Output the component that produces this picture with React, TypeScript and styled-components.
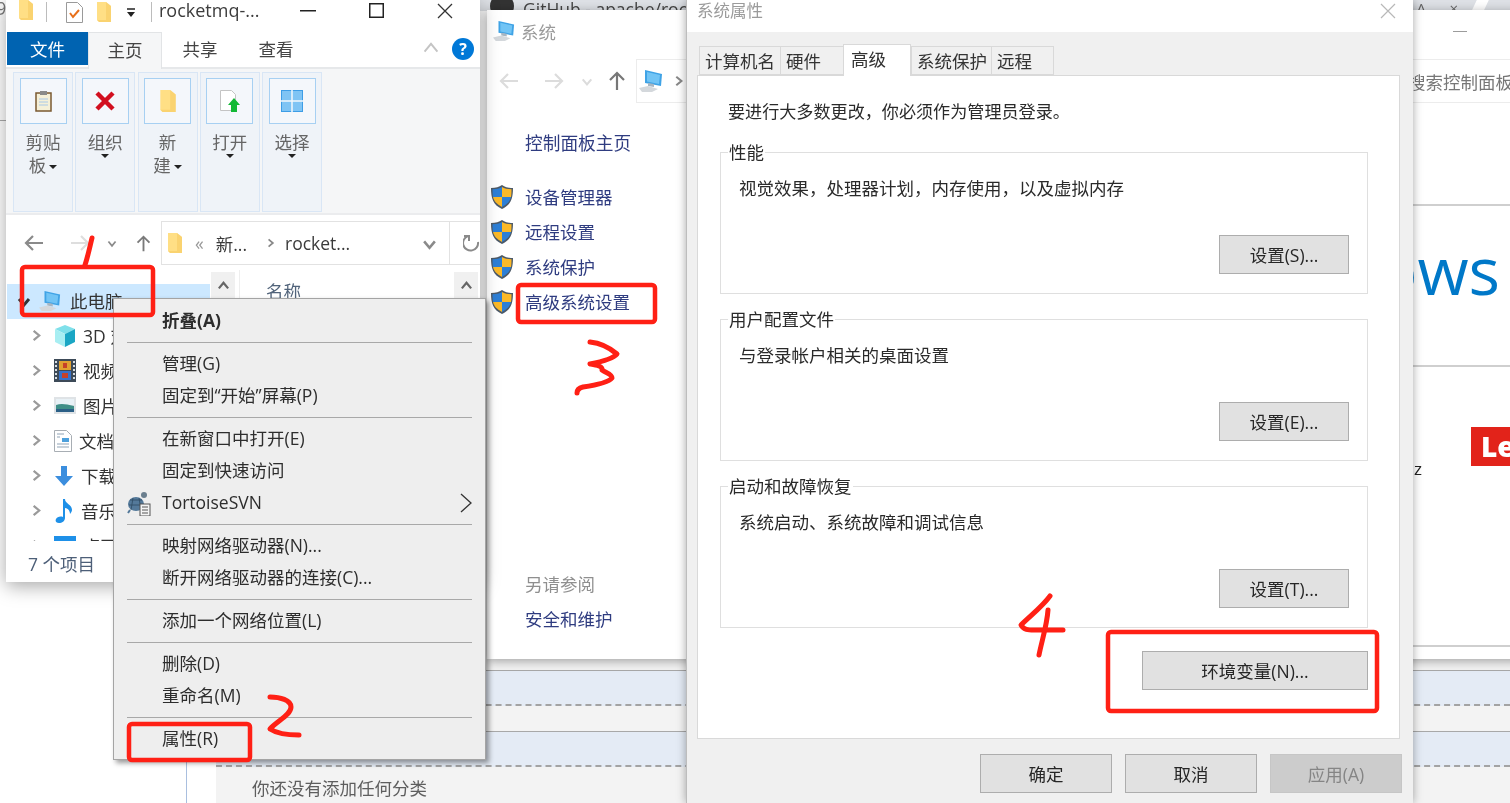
import React from "react";
import styled, { createGlobalStyle } from "styled-components";

const Global = createGlobalStyle`
  html, body { margin: 0; padding: 0; background: #fff; overflow: hidden; }
  * { box-sizing: border-box; }
  body { font-family: "Open Sans", "Noto Sans CJK SC", sans-serif; font-size: 17.5px; color: #2a2a2a; }
`;

const Desktop = styled.div`
  position: relative;
  width: 1510px;
  height: 803px;
  overflow: hidden;
  background: #fff;
  filter: blur(0.4px);
`;

/* ---------- what lies behind the windows ---------- */
const BrowserStrip = styled.div`
  position: absolute;
  left: 480px;
  right: 0;
  top: 0;
  height: 11px;
  background: #dee1e6;
  display: flex;
  align-items: center;
  overflow: hidden;
  padding-left: 10px;
  color: #444;
`;
const BrowserTitle = styled.span`
  margin-left: 9px;
  white-space: nowrap;
  position: relative;
  top: 3px;
`;
const BrowserTabClose = styled.span`
  margin-left: auto;
  margin-right: 16px;
  position: relative;
  top: 2px;
  color: #666;
  font-size: 15px;
  white-space: pre;
`;
const BrowserTabGap = styled.span`
  width: 12px;
  height: 20px;
  margin-right: 24px;
  background: #fff;
  transform: skewX(-25deg);
`;
const EdgeGlyph = styled.div`
  position: absolute;
  left: -4px;
  top: -4px;
  color: #777;
  font-size: 18px;
`;
const EdgeRule = styled.div`
  position: absolute;
  left: 0;
  top: 120px;
  width: 6px;
  height: 1px;
  background: #aaa;
`;
const PageRule = styled.div`
  position: absolute;
  left: 186px;
  top: 756px;
  bottom: 0;
  width: 1px;
  background: #a9bfdf;
`;
const PageBehind = styled.div`
  position: absolute;
  left: 216px;
  right: 0;
  top: 659px;
  bottom: 0;
  background: #f3f3f3;
  display: flex;
  flex-direction: column;
`;
const PageGap = styled.div<{ $h: number }>`
  height: ${(p) => p.$h}px;
  border-bottom: 1px solid #a8a8a8;
`;
const PageBand = styled.div`
  height: 35px;
  background: #e4ebf5;
  border-bottom: 2px dashed #a3a3a3;
`;
const PageNote = styled.div`
  margin-top: 10px;
  padding-left: 36px;
  line-height: 23px;
  color: #5e5e5e;
`;

/* ---------- explorer ---------- */
const Explorer = styled.section`
  position: absolute;
  left: 6px;
  top: 0;
  width: 474px;
  height: 582px;
  background: #fff;
  box-shadow: 0 4px 18px rgba(0, 0, 0, 0.35);
  display: flex;
  flex-direction: column;
`;
const ExplorerTitle = styled.header`
  height: 32px;
  display: flex;
  align-items: flex-start;
  flex: none;
`;
const Quick = styled.span<{ $w: number; $top?: number; $ml?: number }>`
  width: ${(p) => p.$w}px;
  height: 32px;
  flex: none;
  display: flex;
  justify-content: center;
  margin-left: ${(p) => p.$ml ?? 0}px;
  padding-top: ${(p) => p.$top ?? 0}px;
`;
const QuickRule = styled.span<{ $ml?: number }>`
  width: 1px;
  height: 20px;
  margin-top: 2px;
  margin-left: ${(p) => p.$ml ?? 0}px;
  flex: none;
  background: #bcbcbc;
`;
const WindowName = styled.span`
  margin-left: 7px;
  line-height: 20px;
  font-size: 18px;
  color: #3c3c3c;
  white-space: nowrap;
`;
const Controls = styled.div`
  margin-left: auto;
  display: flex;
`;
const Control = styled.span<{ $w: number }>`
  width: ${(p) => p.$w}px;
  height: 21px;
  display: flex;
  align-items: center;
  justify-content: center;
`;
const TabRow = styled.nav`
  height: 37px;
  flex: none;
  display: flex;
  align-items: flex-start;
  border-bottom: 2px solid #e6e8ea;
`;
const FileTab = styled.span`
  width: 81px;
  height: 33px;
  margin-left: 1px;
  background: #0063b1;
  color: #fff;
  display: flex;
  align-items: center;
  justify-content: center;
`;
const HomeTab = styled.span`
  width: 74px;
  height: 37px;
  background: #f5f6f7;
  border: 1px solid #e2e4e6;
  border-bottom: none;
  display: flex;
  align-items: center;
  justify-content: center;
  padding-bottom: 4px;
  color: #444;
`;
const PlainTab = styled.span`
  width: 76px;
  height: 33px;
  display: flex;
  align-items: center;
  justify-content: center;
  color: #444;
`;
const RibbonTools = styled.div`
  margin-left: auto;
  display: flex;
  align-items: center;
  height: 37px;
  gap: 12px;
  padding: 0 6px 4px 0;
`;
const HelpDot = styled.span`
  width: 22px;
  height: 22px;
  border-radius: 50%;
  background: #0078d7;
  color: #fff;
  font-weight: 700;
  font-size: 16px;
  display: flex;
  align-items: center;
  justify-content: center;
`;
const Ribbon = styled.div`
  height: 146px;
  flex: none;
  background: #f5f6f7;
  border-bottom: 2px solid #ebecee;
  padding: 3px 7px;
  display: flex;
  gap: 2.25px;
`;
const RibbonGroup = styled.div`
  width: 60px;
  height: 140px;
  background: #eff3f8;
  border: 1px solid #d9e6f5;
  padding: 5px 5px 0;
  display: flex;
  flex-direction: column;
  align-items: center;
`;
const RibbonButton = styled.div`
  width: 47px;
  height: 46px;
  flex: none;
  background: #f4f7fb;
  border: 1px solid #a7d0f2;
  display: flex;
  align-items: center;
  justify-content: center;
`;
const RibbonLabel = styled.div`
  margin-top: 7px;
  line-height: 23px;
  text-align: center;
  color: #666;
  white-space: nowrap;
`;
const Caret = styled.span`
  display: inline-block;
  width: 0;
  height: 0;
  margin-left: 3px;
  vertical-align: middle;
  border-left: 4px solid transparent;
  border-right: 4px solid transparent;
  border-top: 4px solid #222;
`;
const BlockCaret = styled(Caret)`
  display: block;
  margin: 0 auto;
`;
const NavRow = styled.div`
  height: 55px;
  flex: none;
  display: flex;
  align-items: flex-start;
  padding-top: 6px;
`;
const NavSlot = styled.span<{ $w: number }>`
  width: ${(p) => p.$w}px;
  height: 44px;
  flex: none;
  display: flex;
  align-items: center;
  justify-content: center;
`;
const AddressBox = styled.div`
  width: 289px;
  height: 44px;
  flex: none;
  border: 1.5px solid #e2e2e2;
  display: flex;
  align-items: center;
  padding-left: 6px;
  color: #444;
  position: relative;
`;
const Crumb = styled.span<{ $ml: number; $tone?: string }>`
  margin-left: ${(p) => p.$ml}px;
  color: ${(p) => p.$tone ?? "#3a3a3a"};
  white-space: nowrap;
  display: flex;
`;
const AddressEnd = styled.span`
  margin-left: auto;
  margin-right: 12px;
  display: flex;
`;
const RefreshBox = styled.span`
  flex: 1;
  height: 44px;
  border: 1.5px solid #e2e2e2;
  border-left: none;
  border-right: none;
  display: flex;
  align-items: center;
  justify-content: flex-end;
  overflow: hidden;
`;
const Panes = styled.div`
  height: 271px;
  flex: none;
  overflow: hidden;
  display: flex;
`;
const TreePane = styled.div`
  width: 204px;
  flex: none;
  padding: 14px 0 0 1px;
`;
const TreeRow = styled.div<{ $on?: boolean; $indent: number }>`
  height: 35px;
  display: flex;
  align-items: center;
  white-space: nowrap;
  overflow: hidden;
  background: ${(p) => (p.$on ? "#cce8ff" : "transparent")};
  padding: 0 0 2px ${(p) => p.$indent}px;
  color: #333;
`;
const TreeIcon = styled.span<{ $ml: number; $mr: number }>`
  margin-left: ${(p) => p.$ml}px;
  margin-right: ${(p) => p.$mr}px;
  display: flex;
  flex: none;
`;
const ScrollCap = styled.div<{ $mr: number }>`
  width: 24px;
  height: 28px;
  margin: 2px ${(p) => p.$mr}px 0 1px;
  flex: none;
  background: #f0f0f0;
  display: flex;
  align-items: center;
  justify-content: center;
`;
const ColumnHead = styled.div`
  flex: 1;
  padding: 10px 0 0 26px;
  line-height: 23px;
  color: #51637a;
  border-left: 1px solid #eee;
`;
const StatusBar = styled.footer`
  flex: 1;
  padding: 10px 0 0 22px;
  line-height: 26px;
  color: #4d5f78;
`;

/* ---------- context menu ---------- */
const Menu = styled.div`
  position: absolute;
  left: 113px;
  top: 298px;
  width: 373px;
  height: 462px;
  background: #eee;
  border: 1px solid #a4a4a4;
  box-shadow: 3px 3px 5px rgba(0, 0, 0, 0.4);
  padding-top: 6px;
  z-index: 2;
`;
const MenuRow = styled.div<{ $strong?: boolean }>`
  height: 32px;
  position: relative;
  display: flex;
  align-items: center;
  padding: 0 0 3px 48px;
  font-weight: ${(p) => (p.$strong ? 700 : 400)};
  color: #2d2d2d;
  white-space: nowrap;
`;
const MenuRule = styled.div`
  height: 1px;
  margin: 5px 13px;
  background: #a8a8a8;
`;
const MenuGlyph = styled.span`
  position: absolute;
  left: 13px;
  top: 3px;
  display: flex;
`;
const MenuArrow = styled.span`
  position: absolute;
  right: 13px;
  top: 6px;
  display: flex;
`;

/* ---------- system window ---------- */
const SystemWindow = styled.section`
  position: absolute;
  left: 487px;
  top: 10px;
  width: 1100px;
  height: 649px;
  background: #fff;
  box-shadow: 0 2px 10px rgba(0, 0, 0, 0.35);
  display: flex;
  flex-direction: column;
`;
const SystemTitle = styled.header`
  height: 44px;
  flex: none;
  display: flex;
  align-items: center;
  padding: 0 0 2px 6px;
  color: #9a9a9a;
  gap: 6px;
`;
const SystemMin = styled.span`
  margin-left: auto;
  margin-right: 120px;
  width: 14px;
  height: 1px;
  background: #9c9c9c;
`;
const SystemNav = styled.div`
  height: 49px;
  flex: none;
  display: flex;
  align-items: flex-start;
  padding: 5px 0 0 0;
`;
const Breadcrumb = styled.div`
  width: 764px;
  height: 44px;
  flex: none;
  border: 1.5px solid #ececec;
  display: flex;
  align-items: center;
  padding-left: 2px;
  gap: 9px;
`;
const SearchBox = styled.div`
  flex: 1;
  height: 44px;
  border: 1.5px solid #ececec;
  border-left: none;
  display: flex;
  align-items: center;
  padding-left: 8px;
  color: #777;
`;
const SystemBody = styled.div`
  flex: 1;
  display: flex;
  min-height: 0;
`;
const SideBar = styled.aside`
  width: 200px;
  flex: none;
  padding: 24px 0 22px 4px;
  display: flex;
  flex-direction: column;
`;
const SideHome = styled.div`
  line-height: 32px;
  padding-left: 34px;
  color: #2f3c80;
  margin-bottom: 20px;
  font-size: 17.7px;
`;
const SideLink = styled.div`
  height: 35px;
  display: flex;
  align-items: center;
  gap: 12px;
  color: #2f3c80;
  white-space: nowrap;
`;
const SideSeeAlso = styled.div`
  margin-top: auto;
  line-height: 35px;
  padding-left: 34px;
  color: #8f8f8f;
`;
const SidePlain = styled.div`
  line-height: 35px;
  padding-left: 34px;
  color: #2f3c80;
`;
const MainColumn = styled.main`
  flex: 1;
  display: flex;
  flex-direction: column;
`;
const MainSection = styled.div<{ $h: number }>`
  height: ${(p) => p.$h}px;
  flex: none;
  border-bottom: 2px solid #cfcfcf;
`;
const BrandSection = styled(MainSection)`
  text-align: right;
  padding: 28px 87px 0 0;
`;
const BrandWord = styled.span`
  font-size: 66px;
  font-weight: 400;
  line-height: 70px;
  color: #0078c8;
  font-family: "Open Sans", sans-serif;
`;
const SpecSection = styled(MainSection)`
  display: flex;
  align-items: flex-start;
  padding: 60px 0 0 0;
`;
const SpecText = styled.span`
  margin-left: auto;
  margin-top: 30px;
  line-height: 24px;
  font-size: 17px;
  color: #222;
`;
const Lenovo = styled.span`
  width: 116px;
  height: 39px;
  margin-left: 49px;
  background: #e2231a;
  color: #fff;
  font-weight: 800;
  font-size: 28px;
  line-height: 39px;
  padding-left: 10px;
  font-family: "Open Sans", sans-serif;
`;

/* ---------- system properties dialog ---------- */
const Dialog = styled.section`
  position: absolute;
  left: 686px;
  top: 0;
  width: 727px;
  height: 803px;
  background: #f0f0f0;
  border-left: 1px solid #bdbdbd;
  box-shadow: 0 0 9px rgba(0, 0, 0, 0.35);
  display: flex;
  flex-direction: column;
`;
const DialogTitle = styled.header`
  height: 32px;
  flex: none;
  background: #fff;
  display: flex;
  align-items: flex-start;
  justify-content: space-between;
  padding: 0 17px 0 10px;
  color: #9b9b9b;
  line-height: 22px;
  font-size: 16.5px;
`;
const DialogClose = styled.svg`
  margin-top: 3px;
`;
const DialogTabs = styled.div`
  display: flex;
  align-items: flex-end;
  height: 31px;
  margin: 12px 0 0 12px;
  flex: none;
  position: relative;
  z-index: 1;
`;
const DialogTab = styled.span<{ $w: number; $on?: boolean }>`
  width: ${(p) => p.$w}px;
  height: ${(p) => (p.$on ? 32 : 29)}px;
  margin-bottom: ${(p) => (p.$on ? -1 : 0)}px;
  background: ${(p) => (p.$on ? "#fff" : "#f0f0f0")};
  border: 1px solid #d9d9d9;
  border-right-width: ${(p) => (p.$on ? 1 : 0)}px;
  border-bottom: ${(p) => (p.$on ? "none" : "1px solid #d9d9d9")};
  padding: ${(p) => (p.$on ? "0 0 4px 7px" : "0 0 0 5px")};
  display: flex;
  align-items: center;
  white-space: nowrap;
  color: #333;
`;
const TabEnd = styled.span`
  width: 1px;
  height: 29px;
  background: #d9d9d9;
`;
const TabPanel = styled.div`
  width: 703px;
  height: 664px;
  flex: none;
  margin-left: 10px;
  background: #fff;
  border: 1px solid #d9d9d9;
  padding: 24px 31px 0 22px;
  display: flex;
  flex-direction: column;
`;
const PanelLead = styled.p`
  margin: 0 0 29px 8px;
  line-height: 23px;
  color: #2a2a2a;
  font-size: 17.1px;
  white-space: nowrap;
`;
const GroupBox = styled.div`
  height: 142px;
  flex: none;
  margin-bottom: 25px;
  border: 1.5px solid #dfdfdf;
  display: flex;
  flex-direction: column;
  align-items: flex-start;
`;
const GroupLabel = styled.span`
  margin: -12px 0 0 7px;
  padding: 0 1px;
  background: #fff;
  line-height: 23px;
  color: #2a2a2a;
`;
const GroupText = styled.span`
  margin: 13px 0 0 18px;
  line-height: 23px;
  color: #2a2a2a;
  white-space: nowrap;
`;
const DialogButton = styled.button<{ $off?: boolean; $w?: number }>`
  width: ${(p) => p.$w ?? 132}px;
  height: 39px;
  flex: none;
  font: inherit;
  padding: 0;
  background: ${(p) => (p.$off ? "#cccccc" : "#e1e1e1")};
  color: ${(p) => (p.$off ? "#858585" : "#262626")};
  border: 1.5px solid ${(p) => (p.$off ? "#c6c6c6" : "#adadad")};
`;
const GroupAction = styled(DialogButton)`
  margin: auto 18px 19px auto;
  align-self: flex-end;
`;
const EnvButton = styled(DialogButton)`
  align-self: flex-end;
  margin-top: -2px;
`;
const DialogFooter = styled.footer`
  padding: 15px 0 0 293px;
  display: flex;
  gap: 13px;
`;

/* ---------- annotations ---------- */
const Ink = styled.svg`
  position: absolute;
  left: 0;
  top: 0;
  z-index: 5;
  pointer-events: none;
`;

/* ---------- drawings ---------- */
const Folder = ({ w = 14, h = 20 }: { w?: number; h?: number }) => (
  <svg width={w} height={h} viewBox="0 0 14 20">
    <path d="M0 0h9l5 4v16H2L0 18z" fill="#ffdf85" />
    <path d="M9 0v18H2l-2 0 2 2h12V4z" fill="#f6c95f" opacity=".55" />
  </svg>
);
const Chevron = ({ dir = "r", c = "#9a9a9a", s = 14, sw = 2.4 }: { dir?: string; c?: string; s?: number; sw?: number }) => {
  const d: Record<string, string> = {
    r: "M5 2l6 5-6 5",
    l: "M9 2L3 7l6 5",
    d: "M2 5l5 6 5-6",
    u: "M2 9l5-6 5 6",
  };
  return (
    <svg width={s} height={s} viewBox="0 0 14 14" fill="none">
      <path d={d[dir]} stroke={c} strokeWidth={sw} />
    </svg>
  );
};
const ArrowIcon = ({ dir, c, w = 20 }: { dir: "l" | "r" | "u"; c: string; w?: number }) => {
  const d = { l: "M19 10H2M9 3l-7 7 7 7", r: "M1 10h17M11 3l7 7-7 7", u: "M10 19V2M3 9l7-7 7 7" };
  return (
    <svg width={w} height={w} viewBox="0 0 20 20" fill="none">
      <path d={d[dir]} stroke={c} strokeWidth={2.2} />
    </svg>
  );
};
const Computer = ({ s = 22 }: { s?: number }) => (
  <svg width={s} height={s} viewBox="0 0 24 24">
    <path d="M6 1l17 4-1 12L6 14z" fill="#3fa3e6" />
    <path d="M8 3l13 3-1 9-12-2.5z" fill="#71c4f5" />
    <path d="M9 14l6 1v3l-6-1z" fill="#a8b6c2" />
    <path d="M0 19l9-2 10 3-6 3H3z" fill="#d4d8dc" />
  </svg>
);
const Shield = () => (
  <svg width={22} height={24} viewBox="0 0 22 24">
    <path d="M11 0c3 2 6 3 11 3 0 10-2 17-11 21C2 20 0 13 0 3c5 0 8-1 11-3z" fill="#4d5a68" />
    <path d="M11 2v10H2c-.4-2-.5-4-.5-7.700 4 0 7-1 9.500-2.300z" fill="#2d7fd6" />
    <path d="M11 2c2.500 1.300 5.500 2.300 9.500 2.300 0 3.700-.1 5.700-.5 7.700h-9z" fill="#fbb928" />
    <path d="M2 12h9v10c-5.500-3-8-6-9-10z" fill="#fbb928" />
    <path d="M11 12h9c-1 4-3.500 7-9 10z" fill="#2d7fd6" />
  </svg>
);
const Cube = () => (
  <svg width={22} height={22} viewBox="0 0 22 22">
    <path d="M11 0l10 4-10 5L1 4z" fill="#7fe0ea" />
    <path d="M1 4l10 5v13L1 17z" fill="#a8eef2" />
    <path d="M21 4L11 9v13l10-5z" fill="#1aa6c4" />
  </svg>
);
const Film = () => (
  <svg width={22} height={23} viewBox="0 0 22 23">
    <rect width="22" height="23" fill="#3d4a58" />
    <path d="M1 2h2v2H1zM1 6h2v2H1zM1 10h2v2H1zM1 14h2v2H1zM1 18h2v2H1zM19 2h2v2h-2zM19 6h2v2h-2zM19 10h2v2h-2zM19 14h2v2h-2zM19 18h2v2h-2z" fill="#d8dde2" />
    <rect x="5" y="2" width="12" height="9" fill="#e0a030" />
    <rect x="5" y="12" width="12" height="9" fill="#3670c8" />
    <path d="M9 4h4v5H9zM8 14h6v5H8z" fill="#c64028" />
  </svg>
);
const Picture = () => (
  <svg width={22} height={17} viewBox="0 0 22 17">
    <rect width="22" height="17" fill="#dfe3e6" />
    <rect x="2" y="2" width="18" height="6" fill="#e8f1f6" />
    <path d="M2 8c5-2 10-1 18 1v6H2z" fill="#3f8f88" />
    <rect x="2" y="12" width="18" height="3" fill="#2b5f86" />
  </svg>
);
const DocIcon = () => (
  <svg width={18} height={22} viewBox="0 0 18 22">
    <path d="M.5.500h12l5 5v16H.5z" fill="#fff" stroke="#a8aeb4" />
    <path d="M3 4h7M3 7h3M3 14h12M3 17h12" stroke="#8fa3b6" />
    <rect x="8" y="8" width="7" height="4" fill="#4da0dc" />
  </svg>
);
const Download = () => (
  <svg width={20} height={20} viewBox="0 0 20 20">
    <path d="M7 0h6v10h6l-9 10L1 10h6z" fill="#3b8ede" />
  </svg>
);
const Note = () => (
  <svg width={20} height={24} viewBox="0 0 20 24">
    <path d="M9 0h2c0 5 7 5 7 11 0 1-1 3-2 4 0-4-3-6-5-6v10c0 3-3 5-6 5-3 0-4-2-3-4s4-3 7-2z" fill="#1e90e8" />
  </svg>
);
const DesktopIcon = () => (
  <svg width={22} height={20} viewBox="0 0 22 20">
    <rect width="22" height="15" fill="#1e90e8" />
  </svg>
);
const Tortoise = () => (
  <svg width={24} height={26} viewBox="0 0 24 26">
    <ellipse cx="9" cy="14" rx="8" ry="7" fill="#54799a" />
    <path d="M3 10h12M2 15h14M6 8l-2 12M12 8l2 12" stroke="#2e4a62" strokeWidth=".8" />
    <circle cx="17" cy="5" r="3" fill="#6b7f8e" />
    <path d="M3 20l-2 3M14 20l1 3" stroke="#54799a" strokeWidth="2" />
    <rect x="13" y="14" width="10" height="12" fill="#f4f4f4" stroke="#555" />
    <path d="M15 17h6M15 20h6M15 23h6" stroke="#555" />
  </svg>
);

const treeRows: [React.ReactNode, string][] = [
  [<Cube key="a" />, "3D 对象"],
  [<Film key="b" />, "视频"],
  [<Picture key="c" />, "图片"],
  [<DocIcon key="d" />, "文档"],
  [<Download key="e" />, "下载"],
  [<Note key="f" />, "音乐"],
  [<DesktopIcon key="g" />, "桌面"],
];

const Rule = MenuRule;

export default function App() {
  return (
    <Desktop>
      <Global />
      <EdgeGlyph>9</EdgeGlyph>
      <EdgeRule />
      <PageRule />
      <BrowserStrip>
        <svg width="24" height="24" viewBox="0 0 24 24">
          <circle cx="12" cy="12" r="12" fill="#333" />
        </svg>
        <BrowserTitle>GitHub - apache/rocketmq</BrowserTitle>
        <BrowserTabClose>{"A      ×"}</BrowserTabClose>
        <BrowserTabGap />
      </BrowserStrip>
      <PageBehind>
        <PageGap $h={12} />
        <PageBand />
        <PageGap $h={26} />
        <PageBand />
        <PageNote>你还没有添加任何分类</PageNote>
      </PageBehind>

      <SystemWindow>
        <SystemTitle>
          <Computer />
          系统
          <SystemMin />
        </SystemTitle>
        <SystemNav>
          <NavSlot $w={44}><ArrowIcon dir="l" c="#dcdcdc" /></NavSlot>
          <NavSlot $w={45}><ArrowIcon dir="r" c="#dcdcdc" /></NavSlot>
          <NavSlot $w={22}><Chevron dir="d" c="#dcdcdc" s={12} /></NavSlot>
          <NavSlot $w={38}><ArrowIcon dir="u" c="#777" /></NavSlot>
          <Breadcrumb>
            <Computer s={24} />
            <Chevron dir="r" c="#888" s={12} />
          </Breadcrumb>
          <SearchBox>搜索控制面板</SearchBox>
        </SystemNav>
        <SystemBody>
          <SideBar>
            <SideHome>控制面板主页</SideHome>
            <SideLink><Shield />设备管理器</SideLink>
            <SideLink><Shield />远程设置</SideLink>
            <SideLink><Shield />系统保护</SideLink>
            <SideLink><Shield />高级系统设置</SideLink>
            <SideSeeAlso>另请参阅</SideSeeAlso>
            <SidePlain>安全和维护</SidePlain>
          </SideBar>
          <MainColumn>
            <MainSection $h={103} />
            <BrandSection $h={161}>
              <BrandWord>Windows</BrandWord>
            </BrandSection>
            <SpecSection $h={280}>
              <SpecText>3.40GHz</SpecText>
              <Lenovo>Lenovo</Lenovo>
            </SpecSection>
          </MainColumn>
        </SystemBody>
      </SystemWindow>

      <Explorer>
        <ExplorerTitle>
          <Quick $w={40}><Folder h={20} /></Quick>
          <QuickRule />
          <Quick $w={40} $ml={7} $top={2}>
            <svg width="17" height="21" viewBox="0 0 17 21">
              <path d="M.5.500h11l5 5v15H.5z" fill="#fff" stroke="#9a9a9a" />
              <path d="M4 11l3 4 6-7" fill="none" stroke="#e8701a" strokeWidth="2" />
            </svg>
          </Quick>
          <Quick $w={20} $top={2}><Folder h={20} /></Quick>
          <Quick $w={34} $top={8}>
            <svg width="10" height="10" viewBox="0 0 10 10">
              <path d="M1 1h8" stroke="#222" strokeWidth="1.500" />
              <path d="M1 4h8L5 9z" fill="#222" />
            </svg>
          </Quick>
          <QuickRule $ml={3} />
          <WindowName>rocketmq-...</WindowName>
          <Controls>
            <Control $w={68}>
              <svg width="16" height="2"><rect width="16" height="1.500" fill="#222" /></svg>
            </Control>
            <Control $w={68}>
              <svg width="15" height="15"><rect x=".75" y=".75" width="13.500" height="13.500" fill="none" stroke="#222" strokeWidth="1.500" /></svg>
            </Control>
            <Control $w={70}>
              <svg width="16" height="16"><path d="M1 1l14 14M15 1L1 15" stroke="#333" strokeWidth="1.300" /></svg>
            </Control>
          </Controls>
        </ExplorerTitle>
        <TabRow>
          <FileTab>文件</FileTab>
          <HomeTab>主页</HomeTab>
          <PlainTab>共享</PlainTab>
          <PlainTab>查看</PlainTab>
          <RibbonTools>
            <Chevron dir="u" c="#c4c4c4" s={18} sw={1.500} />
            <HelpDot>?</HelpDot>
          </RibbonTools>
        </TabRow>
        <Ribbon>
          <RibbonGroup>
            <RibbonButton>
              <svg width="17" height="21" viewBox="0 0 17 21">
                <rect x="1" y="2" width="15" height="18" fill="#f5f0d8" stroke="#7a5a30" strokeWidth="1.500" />
                <rect x="5" y="0" width="7" height="4" fill="#8a8a8a" />
                <path d="M4 8h9M4 11h9M4 14h9" stroke="#a8c8e8" />
              </svg>
            </RibbonButton>
            <RibbonLabel>剪贴<br />板<Caret /></RibbonLabel>
          </RibbonGroup>
          <RibbonGroup>
            <RibbonButton>
              <svg width="20" height="20" viewBox="0 0 20 20">
                <path d="M2 2l16 16M18 2L2 18" stroke="#d20f1f" strokeWidth="4.500" />
              </svg>
            </RibbonButton>
            <RibbonLabel>组织<BlockCaret /></RibbonLabel>
          </RibbonGroup>
          <RibbonGroup>
            <RibbonButton><Folder w={18} h={22} /></RibbonButton>
            <RibbonLabel>新<br />建<Caret /></RibbonLabel>
          </RibbonGroup>
          <RibbonGroup>
            <RibbonButton>
              <svg width="22" height="23" viewBox="0 0 22 23">
                <path d="M1.500.500h11l4 4v16h-15z" fill="#fff" stroke="#c4c4c4" />
                <path d="M15 8l6 7h-3v7h-6v-7H9z" fill="#12b835" />
              </svg>
            </RibbonButton>
            <RibbonLabel>打开<BlockCaret /></RibbonLabel>
          </RibbonGroup>
          <RibbonGroup>
            <RibbonButton>
              <svg width="22" height="22" viewBox="0 0 22 22">
                <rect x=".5" y=".5" width="21" height="21" fill="#7fc4f4" stroke="#3d9de6" />
                <path d="M11 0v22M0 11h22" stroke="#f4f7fb" strokeWidth="1.500" />
              </svg>
            </RibbonButton>
            <RibbonLabel>选择<BlockCaret /></RibbonLabel>
          </RibbonGroup>
        </Ribbon>
        <NavRow>
          <NavSlot $w={56}><ArrowIcon dir="l" c="#8a8a8a" /></NavSlot>
          <NavSlot $w={36}><ArrowIcon dir="r" c="#dedede" /></NavSlot>
          <NavSlot $w={28}><Chevron dir="d" c="#8a8a8a" s={10} /></NavSlot>
          <NavSlot $w={35}><ArrowIcon dir="u" c="#7a7a7a" w={17} /></NavSlot>
          <AddressBox>
            <Folder h={20} />
            <Crumb $ml={13} $tone="#999">«</Crumb>
            <Crumb $ml={12}>新...</Crumb>
            <Crumb $ml={18}><Chevron dir="r" c="#888" s={10} /></Crumb>
            <Crumb $ml={10}>rocket...</Crumb>
            <AddressEnd><Chevron dir="d" c="#8a8a8a" s={15} /></AddressEnd>
          </AddressBox>
          <RefreshBox>
            <svg width="17" height="20" viewBox="0 0 17 20" fill="none">
              <path d="M1 3h5v5M5 3a7.500 7.500 0 1 0 10 6" stroke="#8a8a8a" strokeWidth="2" />
            </svg>
          </RefreshBox>
        </NavRow>
        <Panes>
          <TreePane>
            <TreeRow $on $indent={10}>
              <Chevron dir="d" c="#333" s={14} sw={3} />
              <TreeIcon $ml={8} $mr={9}><Computer s={22} /></TreeIcon>
              此电脑
            </TreeRow>
            {treeRows.map(([icon, name]) => (
              <TreeRow $indent={22} key={name}>
                <Chevron dir="r" c="#9a9a9a" s={13} />
                <TreeIcon $ml={12} $mr={7}>{icon}</TreeIcon>
                {name}
              </TreeRow>
            ))}
          </TreePane>
          <ScrollCap $mr={4}><Chevron dir="u" c="#666" s={13} /></ScrollCap>
          <ColumnHead>名称</ColumnHead>
          <ScrollCap $mr={2}><Chevron dir="u" c="#666" s={13} /></ScrollCap>
        </Panes>
        <StatusBar>7 个项目</StatusBar>
      </Explorer>

      <Menu>
        <MenuRow $strong>折叠(A)</MenuRow>
        <Rule />
        <MenuRow>管理(G)</MenuRow>
        <MenuRow>固定到“开始”屏幕(P)</MenuRow>
        <Rule />
        <MenuRow>在新窗口中打开(E)</MenuRow>
        <MenuRow>固定到快速访问</MenuRow>
        <MenuRow>
          <MenuGlyph><Tortoise /></MenuGlyph>
          TortoiseSVN
          <MenuArrow>
            <svg width="12" height="20" viewBox="0 0 12 20" fill="none">
              <path d="M1 1l10 9-10 9" stroke="#333" strokeWidth="1.300" />
            </svg>
          </MenuArrow>
        </MenuRow>
        <Rule />
        <MenuRow>映射网络驱动器(N)...</MenuRow>
        <MenuRow>断开网络驱动器的连接(C)...</MenuRow>
        <Rule />
        <MenuRow>添加一个网络位置(L)</MenuRow>
        <Rule />
        <MenuRow>删除(D)</MenuRow>
        <MenuRow>重命名(M)</MenuRow>
        <Rule />
        <MenuRow>属性(R)</MenuRow>
      </Menu>

      <Dialog>
        <DialogTitle>
          系统属性
          <DialogClose width="16" height="16" viewBox="0 0 16 16">
            <path d="M1 1l14 14M15 1L1 15" stroke="#b8b8b8" strokeWidth="1.200" />
          </DialogClose>
        </DialogTitle>
        <DialogTabs>
          <DialogTab $w={81}>计算机名</DialogTab>
          <DialogTab $w={63}>硬件</DialogTab>
          <DialogTab $w={68} $on>高级</DialogTab>
          <DialogTab $w={80}>系统保护</DialogTab>
          <DialogTab $w={62}>远程</DialogTab>
          <TabEnd />
        </DialogTabs>
        <TabPanel>
          <PanelLead>要进行大多数更改，你必须作为管理员登录。</PanelLead>
          <GroupBox>
            <GroupLabel>性能</GroupLabel>
            <GroupText>视觉效果，处理器计划，内存使用，以及虚拟内存</GroupText>
            <GroupAction $w={130}>设置(S)...</GroupAction>
          </GroupBox>
          <GroupBox>
            <GroupLabel>用户配置文件</GroupLabel>
            <GroupText>与登录帐户相关的桌面设置</GroupText>
            <GroupAction $w={130}>设置(E)...</GroupAction>
          </GroupBox>
          <GroupBox>
            <GroupLabel>启动和故障恢复</GroupLabel>
            <GroupText>系统启动、系统故障和调试信息</GroupText>
            <GroupAction $w={130}>设置(T)...</GroupAction>
          </GroupBox>
          <EnvButton $w={226}>环境变量(N)...</EnvButton>
        </TabPanel>
        <DialogFooter>
          <DialogButton>确定</DialogButton>
          <DialogButton>取消</DialogButton>
          <DialogButton $off>应用(A)</DialogButton>
        </DialogFooter>
      </Dialog>

      <Ink width="1510" height="803" viewBox="0 0 1510 803" fill="none" stroke="#ff2015" strokeLinecap="round" strokeLinejoin="round">
        <g strokeWidth="4.500">
          <rect x="22" y="267" width="131" height="48" rx="3" />
          <rect x="129" y="724" width="121" height="36" rx="3" />
          <rect x="518" y="285" width="137" height="37" rx="3" />
          <rect x="1108" y="632" width="269" height="79" rx="3" />
        </g>
        <g strokeWidth="5">
          <path d="M92 238C90 246 88 256 85 265" />
          <path d="M270 697C280 697 291 700 291 707C291 715 277 721 270 729C276 733 288 735 299 735" />
          <path d="M590 342C600 343 610 348 617 354C613 359 600 362 590 364C596 365 603 366 602 370C606 373 612 374 612 378C608 383 590 386 583 387C579 388 577 390 577 393" />
          <path d="M1050 596C1042 607 1030 616 1021 625C1024 630 1028 630 1034 630L1063 630M1048 610C1047 625 1042 640 1039 655" />
        </g>
      </Ink>
    </Desktop>
  );
}
